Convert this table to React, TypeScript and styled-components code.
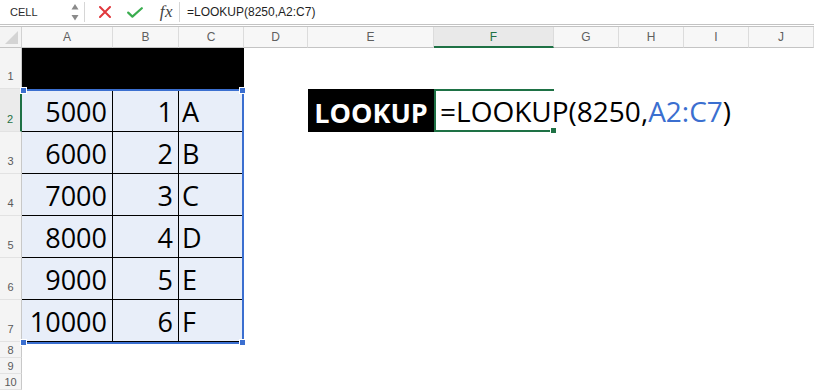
import { Fragment } from "react";
import styled, { createGlobalStyle } from "styled-components";

const GlobalStyle = createGlobalStyle`
    html, body {
        margin: 0;
        padding: 0;
        background: #ffffff;
        overflow: hidden;
    }
    body {
        font-family: "Liberation Sans", Arial, sans-serif;
    }
`

const StyledSheet = styled.div`
    width: 814px;
    height: 390px;
    overflow: hidden;
    display: flex;
    flex-direction: column;
`

/* formula bar across the top */
const StyledFormulaBar = styled.div`
    height: 25px;
    display: flex;
    align-items: center;
    border-bottom: 3px double #c3c3c3;
    background: #ffffff;
`
const StyledNameBox = styled.div`
    width: 84px;
    height: 100%;
    display: flex;
    align-items: center;
    justify-content: space-between;
    padding: 0 5px 0 10px;
    box-sizing: border-box;
    font-size: 11px;
    color: #2b2b2b;
`
const StyledDivider = styled.div`
    width: 1px;
    height: 20px;
    background: #d6d6d6;
`
const StyledTools = styled.div`
    width: 94px;
    display: flex;
    align-items: center;
    justify-content: space-between;
    padding: 0 6px 0 14px;
    box-sizing: border-box;
`
const StyledFx = styled.span`
    font-family: "Liberation Serif", "DejaVu Serif", serif;
    font-style: italic;
    font-size: 17px;
    color: #444444;
    letter-spacing: 0.5px;
`
const StyledFormulaText = styled.div`
    padding-left: 7px;
    font-size: 12px;
    color: #1f1f1f;
`

/* the worksheet grid */
const StyledGrid = styled.div`
    position: relative;
    display: grid;
    grid-template-columns: 22px 91px 66px 65px 64px 126px 120px 65px 65px 65px 65px;
    grid-template-rows: 21px 41px 43px repeat(5, 42px) repeat(3, 16px);
`
const StyledCorner = styled.div`
    background: #f4f4f4;
    border-right: 1px solid #d2d2d2;
    border-bottom: 1px solid #c4c4c4;
    box-sizing: border-box;
    position: relative;

    &::after {
        content: "";
        position: absolute;
        right: 3px;
        bottom: 3px;
        width: 0;
        height: 0;
        border-left: 13px solid transparent;
        border-bottom: 13px solid #d4d4d4;
    }
`
const StyledColHeader = styled.div<{ $active?: boolean }>`
    display: flex;
    align-items: center;
    justify-content: center;
    box-sizing: border-box;
    font-size: 12px;
    color: ${p => (p.$active ? "#1e7145" : "#5f5f5f")};
    background: ${p => (p.$active ? "#e9e9e9" : "#f7f7f7")};
    border-right: 1px solid #dcdcdc;
    border-bottom: ${p => (p.$active ? "2px solid #1e7145" : "1px solid #c4c4c4")};
`
const StyledRowHeader = styled.div<{ $active?: boolean; $small?: boolean }>`
    display: flex;
    align-items: flex-end;
    justify-content: center;
    box-sizing: border-box;
    padding-bottom: ${p => (p.$small ? "1px" : "6px")};
    font-size: 11px;
    line-height: 12px;
    color: ${p => (p.$active ? "#1e7145" : "#5a5a5a")};
    background: ${p => (p.$active ? "#ebebeb" : "#f4f4f4")};
    border-bottom: 1px solid #e2e2e2;
    border-right: ${p => (p.$active ? "2px solid #1e7145" : "1px solid #c8c8c8")};
`
const StyledEmptyCell = styled.div``

const StyledBlackCell = styled.div`
    background: #000000;
`
const StyledDataCell = styled.div<{ $align: "left" | "right"; $divider?: boolean }>`
    display: flex;
    align-items: flex-end;
    justify-content: ${p => (p.$align === "right" ? "flex-end" : "flex-start")};
    box-sizing: border-box;
    padding: 0 ${p => (p.$align === "right" ? "5px" : "0")} 6px ${p => (p.$align === "left" ? "3px" : "0")};
    background: #e8eef9;
    border-bottom: 1px solid #000000;
    border-right: ${p => (p.$divider ? "1px solid #000000" : "none")};
    font-family: "Open Sans", sans-serif;
    font-size: 27px;
    line-height: 1;
    color: #000000;
`
const StyledLabelCell = styled.div`
    display: flex;
    align-items: flex-end;
    justify-content: center;
    padding-bottom: 6px;
    box-sizing: border-box;
    background: #000000;
    color: #ffffff;
    font-family: "Open Sans", sans-serif;
    font-weight: 700;
    font-size: 27px;
    line-height: 1;
`
const StyledActiveCell = styled.div`
    position: relative;
    z-index: 2;
    display: flex;
    align-items: flex-end;
    box-sizing: border-box;
    padding: 0 0 5px 4px;
    border: 2px solid #1e7145;
    border-right: none;
    white-space: nowrap;
    overflow: visible;
    font-family: "Open Sans", sans-serif;
    font-size: 28px;
    line-height: 1;
    color: #000000;

    &::after {
        content: "";
        position: absolute;
        right: -3px;
        bottom: -4px;
        width: 5px;
        height: 5px;
        background: #1e7145;
        border: 1px solid #ffffff;
    }
`
const StyledRef = styled.span`
    color: #3b6fd0;
`

/* blue range selection over A2:C7, laid over the cells */
const StyledSelection = styled.div`
    grid-column: 2 / 5;
    grid-row: 3 / 9;
    position: absolute;
    top: 0;
    left: 0;
    right: 0;
    bottom: -2px;
    z-index: 3;
    pointer-events: none;
    border-top: 2px solid #3b6fd0;
    border-right: 2px solid #3b6fd0;
    border-bottom: 2px solid #3b6fd0;
`
const StyledHandle = styled.div<{ $top: boolean; $left: boolean }>`
    position: absolute;
    width: 5px;
    height: 5px;
    background: #3b6fd0;
    border: 1px solid #ffffff;
    ${p => (p.$top ? "top: -4px;" : "bottom: -4px;")}
    ${p => (p.$left ? "left: -2px;" : "right: -4px;")}
`

const columns = ["A", "B", "C", "D", "E", "F", "G", "H", "I", "J"];
const tableRows: [number, number, string][] = [
    [5000, 1, "A"],
    [6000, 2, "B"],
    [7000, 3, "C"],
    [8000, 4, "D"],
    [9000, 5, "E"],
    [10000, 6, "F"],
];

function Empties({ count }: { count: number }) {
    return (
        <>
            {Array.from({ length: count }).map((_, i) => (
                <StyledEmptyCell key={i} />
            ))}
        </>
    );
}

export default function App() {
    return (
        <>
            <GlobalStyle />
            <StyledSheet>
                <StyledFormulaBar>
                    <StyledNameBox>
                        <span>CELL</span>
                        <svg width="8" height="17" viewBox="0 0 8 17">
                            <path d="M4 0 L7.5 5.5 L0.5 5.5 Z" fill="#8a8a8a" />
                            <path d="M4 16.5 L7.5 11 L0.5 11 Z" fill="#8a8a8a" />
                        </svg>
                    </StyledNameBox>
                    <StyledDivider />
                    <StyledTools>
                        <svg width="12" height="12" viewBox="0 0 12 12">
                            <path d="M1 1 L11 11 M11 1 L1 11" stroke="#e0383d" strokeWidth="2" strokeLinecap="round" />
                        </svg>
                        <svg width="16" height="11" viewBox="0 0 16 11">
                            <path d="M1.2 5.6 L5.4 9.6 L14.8 1.2" stroke="#3aad4f" strokeWidth="2.2" fill="none" strokeLinecap="round" strokeLinejoin="round" />
                        </svg>
                        <StyledFx>fx</StyledFx>
                    </StyledTools>
                    <StyledDivider />
                    <StyledFormulaText>=LOOKUP(8250,A2:C7)</StyledFormulaText>
                </StyledFormulaBar>

                <StyledGrid>
                    <StyledCorner />
                    {columns.map(c => (
                        <StyledColHeader key={c} $active={c === "F"}>{c}</StyledColHeader>
                    ))}

                    <StyledRowHeader>1</StyledRowHeader>
                    <StyledBlackCell />
                    <StyledBlackCell />
                    <StyledBlackCell />
                    <Empties count={7} />

                    {tableRows.map(([amount, index, letter], i) => (
                        <Fragment key={i}>
                            <StyledRowHeader $active={i === 0}>{i + 2}</StyledRowHeader>
                            <StyledDataCell $align="right" $divider>{amount}</StyledDataCell>
                            <StyledDataCell $align="right" $divider>{index}</StyledDataCell>
                            <StyledDataCell $align="left">{letter}</StyledDataCell>
                            {i === 0 ? (
                                <>
                                    <StyledEmptyCell />
                                    <StyledLabelCell>LOOKUP</StyledLabelCell>
                                    <StyledActiveCell>
                                        =LOOKUP(8250,<StyledRef>A2:C7</StyledRef>)
                                    </StyledActiveCell>
                                    <Empties count={4} />
                                </>
                            ) : (
                                <Empties count={7} />
                            )}
                        </Fragment>
                    ))}

                    {[8, 9, 10].map(n => (
                        <Fragment key={n}>
                            <StyledRowHeader $small>{n}</StyledRowHeader>
                            <Empties count={10} />
                        </Fragment>
                    ))}

                    <StyledSelection>
                        <StyledHandle $top $left />
                        <StyledHandle $top $left={false} />
                        <StyledHandle $top={false} $left />
                        <StyledHandle $top={false} $left={false} />
                    </StyledSelection>
                </StyledGrid>
            </StyledSheet>
        </>
    );
}
